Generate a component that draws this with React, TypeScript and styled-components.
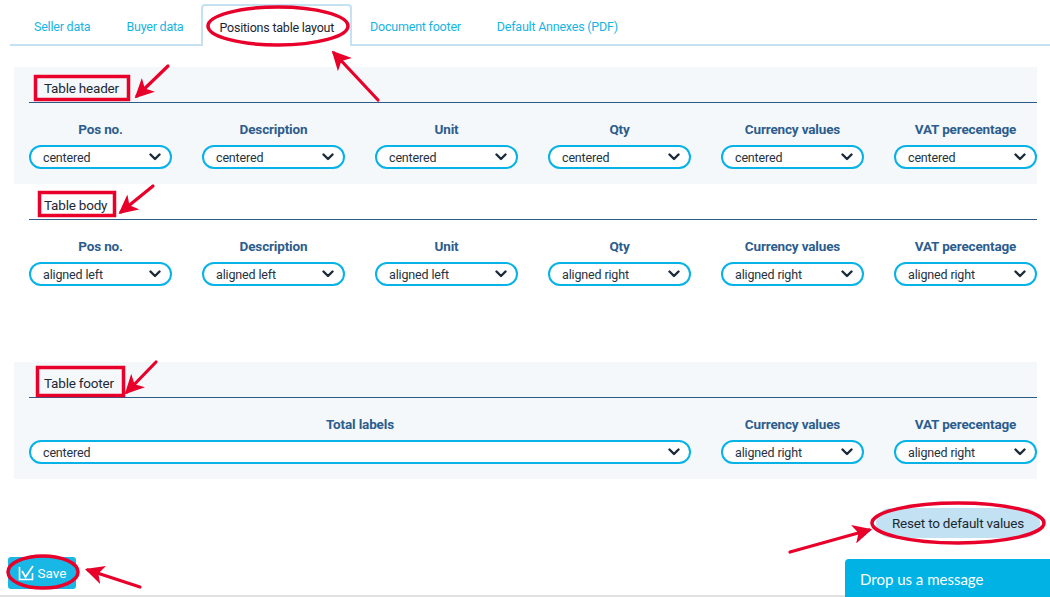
import styled, { createGlobalStyle } from "styled-components";

const GlobalStyle = createGlobalStyle`
	html, body {
		margin: 0;
		padding: 0;
		background: #ffffff;
		font-family: Roboto, "Liberation Sans", sans-serif;
	}
	#root {
		min-height: 597px;
	}
`;

const columns = [
	{ label: "Pos no.", header: "centered", body: "aligned left" },
	{ label: "Description", header: "centered", body: "aligned left" },
	{ label: "Unit", header: "centered", body: "aligned left" },
	{ label: "Qty", header: "centered", body: "aligned right" },
	{ label: "Currency values", header: "centered", body: "aligned right" },
	{ label: "VAT perecentage", header: "centered", body: "aligned right" },
];

const tabs = ["Seller data", "Buyer data", "Positions table layout", "Document footer", "Default Annexes (PDF)"];

function Chevron() {
	return (
		<svg width="12" height="8" viewBox="0 0 12 8">
			<path d="M1.5 1.5 L6 6 L10.5 1.5" fill="none" stroke="#1c2b3a" strokeWidth="2.4" strokeLinecap="round" strokeLinejoin="round" />
		</svg>
	);
}

function SelectBox({ value }: { value: string }) {
	return (
		<Select>
			<span>{value}</span>
			<Chevron />
		</Select>
	);
}

function Annotations() {
	// red markup drawn over the screenshot
	const arrows = [
		[168, 66, 137, 96],
		[378, 100, 334, 53],
		[153, 186, 121, 212],
		[156, 362, 127, 392],
		[790, 552, 869, 530],
		[140, 587, 88, 570],
	];
	return (
		<Overlay width="1050" height="597" viewBox="0 0 1050 597">
			<defs>
				<marker id="head" markerWidth="7" markerHeight="6" refX="5" refY="3" orient="auto" markerUnits="strokeWidth">
					<path d="M0 0 L6 3 L0 6 L1.6 3 Z" fill="#e8002a" />
				</marker>
			</defs>
			<g fill="none" stroke="#e8002a" strokeWidth="3.5">
				<ellipse cx="278" cy="26" rx="70" ry="19" />
				<ellipse cx="958" cy="523" rx="86" ry="20" />
				<ellipse cx="43" cy="572" rx="35" ry="16" />
				<rect x="35.5" y="76.5" width="93" height="23" />
				<rect x="39.5" y="192.5" width="75" height="23" />
				<rect x="37.5" y="367.5" width="86" height="28" />
			</g>
			{arrows.map(([x1, y1, x2, y2], i) => (
				<line key={i} x1={x1} y1={y1} x2={x2} y2={y2} stroke="#e8002a" strokeWidth="3.2" strokeLinecap="round" markerEnd="url(#head)" />
			))}
		</Overlay>
	);
}

export default function App() {
	return (
		<>
			<GlobalStyle />
			<Page>
				<TabBar>
					{tabs.map((t) => (
						<Tab key={t} $active={t === "Positions table layout"}>
							{t}
						</Tab>
					))}
				</TabBar>

				<Panel $shaded $gap={21}>
					<SectionTitle>
						<span>Table header</span>
					</SectionTitle>
					<Grid>
						{columns.map((c) => (
							<Field key={c.label}>
								<Label>{c.label}</Label>
								<SelectBox value={c.header} />
							</Field>
						))}
					</Grid>
				</Panel>

				<Panel>
					<SectionTitle>
						<span>Table body</span>
					</SectionTitle>
					<Grid>
						{columns.map((c) => (
							<Field key={c.label}>
								<Label>{c.label}</Label>
								<SelectBox value={c.body} />
							</Field>
						))}
					</Grid>
				</Panel>

				<Panel $shaded $gap={61}>
					<SectionTitle>
						<span>Table footer</span>
					</SectionTitle>
					<Grid>
						<Field $span={4}>
							<Label>Total labels</Label>
							<SelectBox value="centered" />
						</Field>
						<Field>
							<Label>Currency values</Label>
							<SelectBox value="aligned right" />
						</Field>
						<Field>
							<Label>VAT perecentage</Label>
							<SelectBox value="aligned right" />
						</Field>
					</Grid>
				</Panel>

				<ResetRow>
					<ResetButton>Reset to default values</ResetButton>
				</ResetRow>

				<BottomRow>
					<SaveButton>
						<svg width="16" height="16" viewBox="0 0 16 16">
							<path d="M1.5 2 V14.5 H14.5 V8" fill="none" stroke="#fff" strokeWidth="1.6" />
							<path d="M4 6 L7.5 12 L15 1" fill="none" stroke="#fff" strokeWidth="1.8" />
						</svg>
						Save
					</SaveButton>
					<ChatTab>Drop us a message</ChatTab>
				</BottomRow>

				<Annotations />
			</Page>
		</>
	);
}

const Page = styled.div`
	position: relative;
	width: 1050px;
	height: 597px;
	overflow: hidden;
	padding-top: 4px;
	box-sizing: border-box;
`;

const TabBar = styled.div`
	display: flex;
	margin-left: 10px;
	padding-left: 6px;
	height: 42px;
	box-sizing: border-box;
	border-bottom: 2px solid #c4e2f1;
`;

const Tab = styled.div<{ $active?: boolean }>`
	display: flex;
	align-items: center;
	padding: 2px 16px 0;
	font-size: 12.5px;
	letter-spacing: -0.22px;
	color: ${(p) => (p.$active ? "#1d2630" : "#16b4e3")};
	background: #fff;
	border: 2px solid ${(p) => (p.$active ? "#c4e2f1" : "transparent")};
	border-bottom: none;
	border-radius: 4px 4px 0 0;
	height: ${(p) => (p.$active ? "42px" : "40px")};
	box-sizing: border-box;
`;

const Panel = styled.section<{ $shaded?: boolean; $gap?: number }>`
	margin: ${(p) => p.$gap ?? 0}px 0 0 14px;
	width: 1023px;
	padding: 0 0 15px 15px;
	box-sizing: border-box;
	background: ${(p) => (p.$shaded ? "#f5f8fb" : "#ffffff")};
`;

const SectionTitle = styled.div`
	height: 36px;
	box-sizing: border-box;
	display: flex;
	align-items: flex-end;
	border-bottom: 1px solid #2d5b88;
	span {
		padding: 0 0 6px 15px;
		font-size: 13.5px;
		line-height: 16px;
		letter-spacing: -0.2px;
		color: #1d2935;
	}
`;

const Grid = styled.div`
	display: grid;
	grid-template-columns: repeat(6, 143px);
	column-gap: 30px;
	padding-top: 18px;
`;

const Field = styled.div<{ $span?: number }>`
	display: flex;
	flex-direction: column;
	align-items: stretch;
	grid-column: span ${(p) => p.$span ?? 1};
`;

const Label = styled.div`
	text-align: center;
	font-size: 13.5px;
	font-weight: bold;
	letter-spacing: -0.15px;
	color: #2c5d8c;
	height: 16px;
	line-height: 16px;
	margin-bottom: 8px;
`;

const Select = styled.div`
	height: 24px;
	box-sizing: border-box;
	border: 2px solid #07b3e6;
	border-radius: 12px;
	background: #fff;
	display: flex;
	align-items: center;
	justify-content: space-between;
	padding: 0 9px 0 12px;
	font-size: 12.5px;
	letter-spacing: -0.15px;
	color: #25323f;
`;

const ResetRow = styled.div`
	display: flex;
	justify-content: flex-end;
	padding: 29px 10px 0 0;
`;

const ResetButton = styled.div`
	width: 164px;
	height: 30px;
	border-radius: 15px;
	background: #c2e1f2;
	color: #1c2834;
	font-size: 13.5px;
	letter-spacing: -0.2px;
	display: flex;
	align-items: center;
	justify-content: center;
`;

const BottomRow = styled.div`
	height: 40px;
	margin-top: 19px;
	border-bottom: 2px solid #e2e2e2;
	display: flex;
	justify-content: space-between;
	align-items: flex-start;
	box-sizing: border-box;
`;

const SaveButton = styled.div`
	margin: 0 0 0 8px;
	width: 68px;
	height: 32px;
	background: #19b7e6;
	border-radius: 3px;
	color: #fff;
	font-size: 13.5px;
	display: flex;
	align-items: center;
	justify-content: center;
	gap: 4px;
`;

const ChatTab = styled.div`
	margin-top: 2px;
	width: 205px;
	height: 38px;
	flex-shrink: 0;
	background: #00b3e4;
	border-radius: 4px 0 0 0;
	color: #fff;
	font-family: Lato, sans-serif;
	font-size: 15px;
	padding: 11px 0 0 15px;
	box-sizing: border-box;
`;

const Overlay = styled.svg`
	position: absolute;
	left: 0;
	top: 0;
	pointer-events: none;
`;
